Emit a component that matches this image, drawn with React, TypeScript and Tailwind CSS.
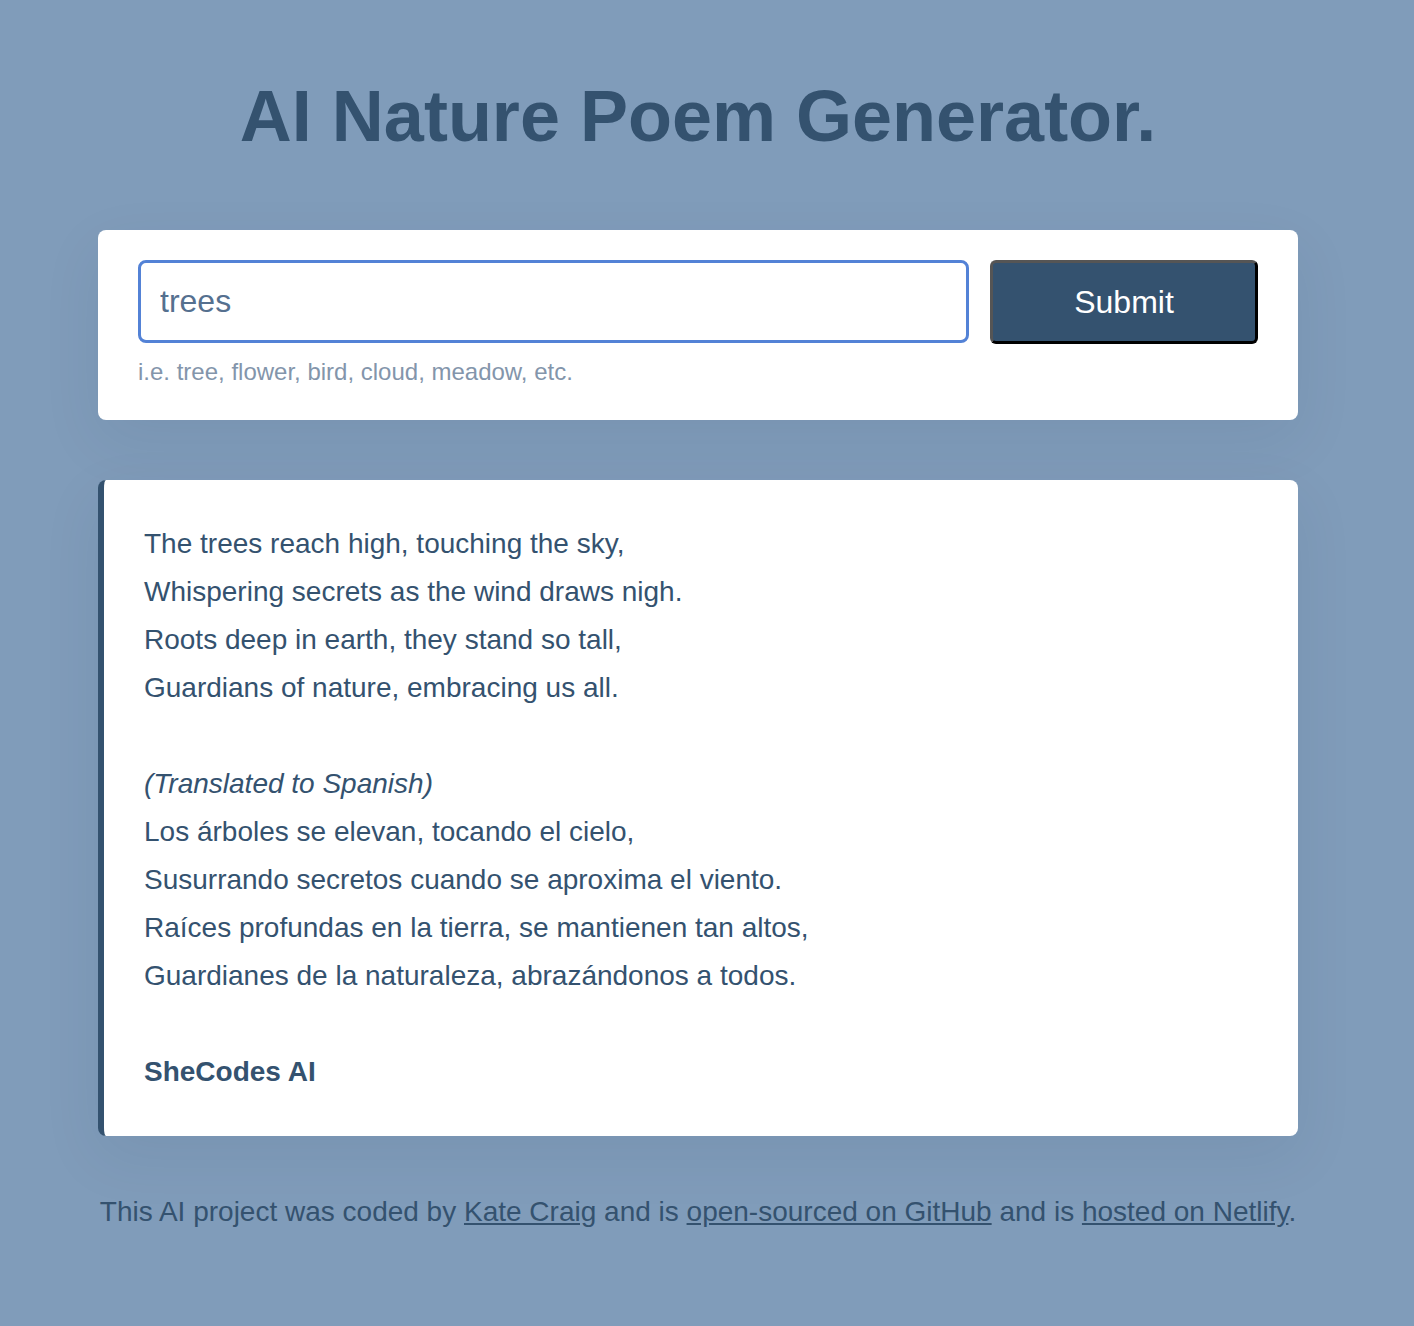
import React, { useState } from "react";

export default function App() {
  const [word, setWord] = useState("trees");

  return (
    <div
      className="min-h-screen bg-[#809cba] text-[#34526f]"
      style={{ fontFamily: '"Liberation Sans", Arial, sans-serif' }}
    >
      <div className="w-[1200px] ml-[98px] pt-[72px] pb-[80px]">
        {/* HEADER */}
        <h1 className="text-center text-[72px] font-bold leading-none pt-[8px] pb-[78px]">
          AI Nature Poem Generator.
        </h1>

        {/* FORM */}
        <div className="bg-white rounded-lg px-10 pt-[30px] pb-[36px] shadow-[0_20px_60px_rgba(30,50,80,0.08)]">
          <form className="flex gap-[21px]" onSubmit={(e) => e.preventDefault()}>
            <input
              value={word}
              onChange={(e) => setWord(e.target.value)}
              className="w-[831px] h-[83px] border-[3px] border-[#5382d6] rounded-lg px-[19px] text-[32px] text-[#55708f] outline-none"
            />
            <button
              type="submit"
              className="w-[268px] h-[84px] bg-[#34526f] text-white text-[32px] rounded-md border-[3px] border-t-[#555] border-l-[#555] border-r-black border-b-black"
            >
              Submit
            </button>
          </form>
          <div className="text-[24px] text-[#8395ab] mt-[16px] leading-none">
            i.e. tree, flower, bird, cloud, meadow, etc.
          </div>
        </div>

        {/* POEM */}
        <div className="bg-white rounded-lg border-l-[6px] border-[#34526f] mt-[60px] pl-10 pr-10 py-10 text-[28px] leading-[48px] shadow-[0_20px_60px_rgba(30,50,80,0.08)]">
          <div>The trees reach high, touching the sky,</div>
          <div>Whispering secrets as the wind draws nigh.</div>
          <div>Roots deep in earth, they stand so tall,</div>
          <div>Guardians of nature, embracing us all.</div>
          <br />
          <div className="italic">(Translated to Spanish)</div>
          <div>Los árboles se elevan, tocando el cielo,</div>
          <div>Susurrando secretos cuando se aproxima el viento.</div>
          <div>Raíces profundas en la tierra, se mantienen tan altos,</div>
          <div>Guardianes de la naturaleza, abrazándonos a todos.</div>
          <br />
          <div className="font-bold">SheCodes AI</div>
        </div>

        {/* FOOTER */}
        <footer className="text-center text-[28px] mt-[55px]">
          This AI project was coded by{" "}
          <a href="#" className="underline">Kate Craig</a> and is{" "}
          <a href="#" className="underline">open-sourced on GitHub</a> and is{" "}
          <a href="#" className="underline">hosted on Netlify</a>.
        </footer>
      </div>
    </div>
  );
}
